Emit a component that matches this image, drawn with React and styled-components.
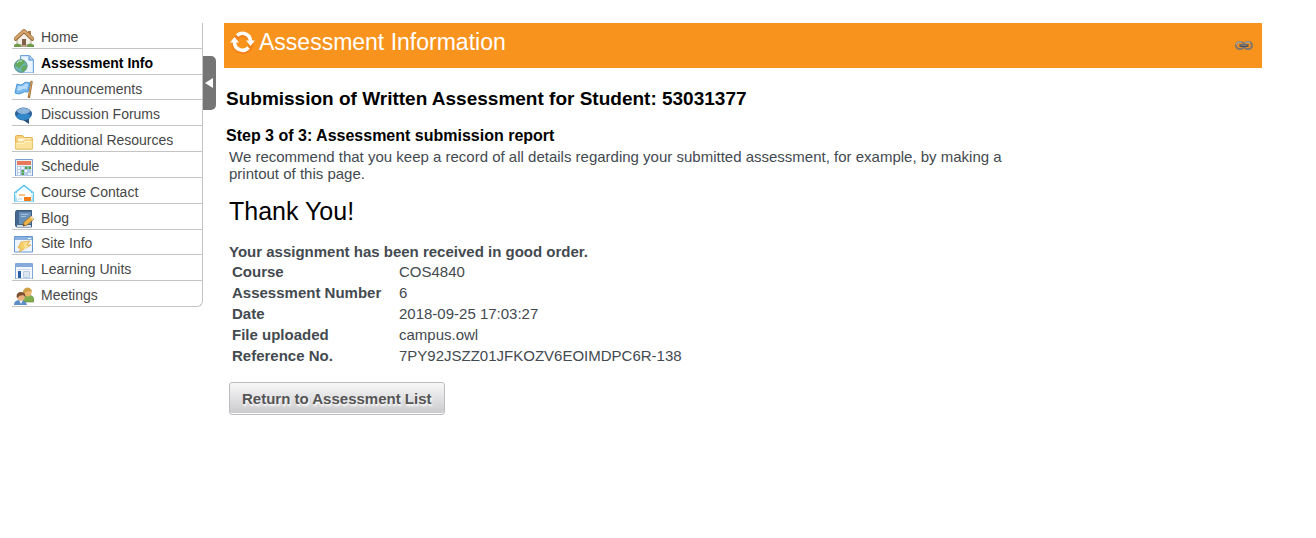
import React from "react";
import styled, { createGlobalStyle, css } from "styled-components";

const GlobalStyle = createGlobalStyle`
  * { box-sizing: border-box; }
  body {
    margin: 0;
    background: #fff;
    color: #434a50;
    font-family: "Liberation Sans", Arial, sans-serif;
    font-size: 15px;
    line-height: 17px;
  }
`;

const Page = styled.div`
  display: flex;
  align-items: flex-start;
  padding: 23px 54px 23px 12px;
`;

const Sidebar = styled.nav`
  flex: 0 0 191px;
`;

const ToolList = styled.ul`
  display: flex;
  flex-direction: column;
  min-height: 284px;
  margin: 0;
  padding: 0;
  list-style: none;
  border-right: 1px solid #c4c4c4;
  border-bottom: 1px solid #c4c4c4;
  border-bottom-right-radius: 6px;
`;

const ToolItem = styled.li`
  display: flex;
  flex: 1 0 0;
  & + & {
    border-top: 1px solid #c4c4c4;
  }
`;

const ToolLink = styled.a`
  display: flex;
  flex: 1;
  align-items: center;
  gap: 7px;
  padding: 4px 0 0 2px;
  color: #474747;
  font-size: 14px;
  text-decoration: none;
  svg {
    flex: none;
    align-self: flex-end;
    margin-bottom: 1px;
  }
  ${(p) =>
    p.$current &&
    css`
      color: #000;
      font-weight: bold;
    `}
`;

const CollapseButton = styled.button`
  display: flex;
  flex: 0 0 13px;
  align-items: center;
  justify-content: center;
  height: 54px;
  margin: 33px 8px 0 0;
  padding: 0;
  border: 0;
  border-radius: 0 5px 5px 0;
  background: #757575;
`;

const Main = styled.main`
  flex: 1;
  min-width: 0;
`;

const TitleBar = styled.header`
  display: flex;
  align-items: flex-start;
  justify-content: space-between;
  height: 45px;
  padding: 5px 8px 0 6px;
  background: #f8941d;
  color: #fff;
`;

const TitleGroup = styled.div`
  display: flex;
  gap: 3px;
`;

const Title = styled.h1`
  margin: 0;
  font-size: 23px;
  font-weight: normal;
  line-height: 28px;
`;

const PermaLink = styled.a`
  display: block;
  height: 12px;
  margin-top: 10px;
`;

const PageHeading = styled.h2`
  margin: 20px 0 0 2px;
  color: #000;
  font-size: 19px;
  line-height: 22px;
`;

const StepHeading = styled.h3`
  margin: 16px 0 0 2px;
  color: #000;
  font-size: 16px;
  line-height: 20px;
`;

const Report = styled.section`
  max-width: 790px;
  padding: 2px 0 0 5px;
`;

const Advice = styled.p`
  margin: 0;
`;

const Thanks = styled.h2`
  margin: 14px 0 0;
  color: #000;
  font-size: 25px;
  font-weight: normal;
  line-height: 30px;
`;

const Received = styled.p`
  margin: 17px 0 0;
  font-weight: bold;
`;

const Details = styled.table`
  margin-top: 1px;
  border-collapse: collapse;
  th,
  td {
    height: 21px;
    padding: 2px 3px;
    text-align: left;
    vertical-align: middle;
  }
  th {
    width: 167px;
  }
`;

const ReturnButton = styled.button`
  height: 33px;
  margin-top: 16px;
  padding: 0 12px;
  border: 1px solid #bdbdc1;
  border-radius: 3px;
  background: linear-gradient(#f8f8f8, #c9c9cd);
  box-shadow: inset 0 -1px #fff;
  color: #555;
  font: bold 15px/17px "Liberation Sans", Arial, sans-serif;
  text-shadow: 1px 2px 2px #fff;
`;

const Icon = ({ children }) => (
  <svg width="20" height="18" viewBox="0 0 20 18" aria-hidden="true">
    {children}
  </svg>
);

const HomeIcon = () => (
  <Icon>
    <path d="M3 9 10 2l7 7v7H3z" fill="#f3efe7" stroke="#b5ad9e" />
    <path d="M14 2h3v5l-3-3z" fill="#b97a43" />
    <path d="M1.500 10 10 2l8.500 8" fill="none" stroke="#99683a" strokeWidth="3.800" strokeLinecap="round" strokeLinejoin="round" />
    <path d="M1.500 9.700 10 1.800l8.500 7.900" fill="none" stroke="#d3a36c" strokeWidth="2.400" strokeLinecap="round" />
    <path d="M8 10h4v7H8z" fill="#806047" />
    <path d="M0 18v-2q3-3 7 0v2zM13 18v-2q3-3 7 0v2z" fill="#6f9a4a" />
    <path d="M7 16h6v2H7z" fill="#b7a28a" />
  </Icon>
);

const GlobeDocIcon = () => (
  <Icon>
    <path d="M6.500 .5h9l4 4V18h-13z" fill="#cfe5fb" stroke="#6fa5dc" />
    <path d="M8 2h6v4h4v11H8z" fill="#eaf4ff" />
    <path d="M15 .5v4.500h4.500" fill="#a9cdf3" stroke="#5e97d3" />
    <circle cx="6.800" cy="11" r="6.300" fill="#6cb4b4" stroke="#5b8f86" />
    <path d="M3 7q3-3 6-2l2 3-3 2-2 3-3-1-2-2zM9 11l4-1-1 4-3 3-2-3z" fill="#63a95c" />
    <path d="M3 8q2-3 5-2" stroke="#c8ebc9" fill="none" />
  </Icon>
);

const FlagIcon = () => (
  <Icon>
    <path d="M17.500 2 15 17" stroke="#a37239" strokeWidth="2.400" strokeLinecap="round" />
    <path d="M17.500 2 15 16" stroke="#d0a064" strokeWidth="1" />
    <path d="M3 4q4 2 6 0 2-3 7-1l-2 9q-4-1-6 1-3 2-7 0z" fill="#78b9ee" stroke="#4c97d6" />
    <path d="M4 6q4 1 6-1 2-2 4-1l-1 5q-4-1-6 1-2 1-4 0z" fill="#b7dcfa" />
  </Icon>
);

const BubbleIcon = () => (
  <Icon>
    <path d="M9 13h6v5l-6-4z" fill="#27507f" />
    <ellipse cx="9.500" cy="8" rx="8.500" ry="6.500" fill="#2c5f9c" />
    <ellipse cx="9.500" cy="10.500" rx="7" ry="3.500" fill="#3188c9" />
    <ellipse cx="9.500" cy="5" rx="6.500" ry="3" fill="#8fb5da" />
  </Icon>
);

const FolderIcon = () => (
  <Icon>
    <path d="M1.500 17V4.500q0-1 1-1h6l2 2h7q1 0 1 1V17z" fill="#f4cf75" stroke="#e2b354" />
    <path d="M4 6.500h13v4H4z" fill="#fff8de" />
    <path d="M1.500 17v-6q0-1 1-1h6l2-2h8v9z" fill="#fae39c" stroke="#ecc568" />
    <path d="M3 11.500h6.500l2-2H17" fill="none" stroke="#fff4c4" />
  </Icon>
);

const CalendarIcon = () => (
  <Icon>
    <path d="M1.500 1.500h17V18h-17z" fill="#e9f1fb" stroke="#7ba1d1" />
    <path d="M3 3h14v4H3z" fill="#e57b5a" />
    <path d="M3 8h14v9H3z" fill="#b3cdea" />
    <path d="M4 9h2v2H4zM7.500 9h2v2h-2zM4 12h2v2H4zM11 12h2v2h-2zM14.500 15h2v2h-2zM4 15h2v2H4z" fill="#fff" />
    <path d="M11 8.500h2.500V11H11zM14.500 8.500H17V11h-2.500zM7.500 12H10v2.500H7.500zM7.500 15H10v2H7.500z" fill="#50a34b" />
  </Icon>
);

const ContactIcon = () => (
  <Icon>
    <path d="M1 8.500 10 1.500l9 7" fill="#f2fbff" stroke="#56c2ea" strokeWidth="1.500" />
    <path d="M.5 8.500h19V18H.5z" fill="#e2f6fd" stroke="#63c7ec" />
    <path d="M3 8h14v9H3z" fill="#fff" />
    <path d="M1 10v8h3zM19 10v8h-2z" fill="#a5e0f6" />
    <path d="M5 10h6v2H5z" fill="#f6c27f" />
    <path d="M10 13h7v4h-7z" fill="#f17c16" />
    <path d="M4 14h4v2H4z" fill="#d6e9f2" />
  </Icon>
);

const BlogIcon = () => (
  <Icon>
    <path d="M3 .5h14.500V17H3q-1.500 0-1.500-2V2.500q0-2 1.500-2z" fill="#44688f" stroke="#3c5b7d" />
    <path d="M5 2h12v12H5z" fill="#6991b8" />
    <path d="M3 15h14v2H3z" fill="#d3dbe4" />
    <path d="M7 4h7v1H7zM7 6h5v1H7z" fill="#a3c0da" />
    <path d="m9 16 1-4 7-6 3 3-7 6z" fill="#efb64c" stroke="#9b6b28" strokeWidth=".8" />
    <path d="m16 7 3 3 1-2-2-2z" fill="#f5dec0" />
    <path d="m9 16 .6-2 1.400 1.300z" fill="#463728" />
  </Icon>
);

const SiteInfoIcon = () => (
  <Icon>
    <path d="M.5 1.500h18V17H.5z" fill="#eef5fd" stroke="#6597d2" />
    <path d="M1 2h17v3H1z" fill="#8ab1df" />
    <path d="M14 3h3v1h-3z" fill="#fff" />
    <path d="m7 7 9-1-3 4h4L5 17l2-4H4z" fill="#f6cf68" stroke="#e0ac45" strokeWidth=".8" />
    <path d="m9 8 4-.5-3 3.500h4l-4 3" fill="none" stroke="#ffeaa6" />
  </Icon>
);

const UnitsIcon = () => (
  <Icon>
    <path d="M1.500 2.500h17V18h-17z" fill="#f3f7fc" stroke="#7fa8d7" />
    <path d="M2 3h16v3H2z" fill="#83aada" />
    <path d="M4 8h12v1H4z" fill="#cadbed" />
    <path d="M4 10h3v7H4z" fill="#255fa8" />
    <path d="M9.500 10.500h6v6h-6z" fill="#dce6f1" stroke="#b6cae1" />
  </Icon>
);

const PeopleIcon = () => (
  <Icon>
    <path d="M9 14q0-6 6-6 5 1 5 5v2H9z" fill="#7fae4c" stroke="#58873a" strokeWidth=".6" />
    <circle cx="13.500" cy="5.500" r="4" fill="#edb66d" />
    <path d="M9 5q0-4 4.500-4.500Q18 1 18 5l-2-1-4 1-2 2z" fill="#cfa046" />
    <path d="M0 18q0-5 6-5t7 5z" fill="#5c8dc4" />
    <path d="m5 13 2 4 2-4z" fill="#eef6ff" />
    <circle cx="7" cy="10" r="3.800" fill="#e9b181" />
    <path d="M2.500 10q0-5 4.500-5t4.500 5L9 8l-4 1-1 2z" fill="#7d4e2f" />
  </Icon>
);

const RefreshIcon = () => (
  <svg width="26" height="28" viewBox="0 0 26 28" aria-hidden="true">
    <circle cx="12.500" cy="15.500" r="8.500" fill="none" stroke="#ee7417" strokeWidth="4.500" opacity=".6" />
    <g fill="none" stroke="#fff" strokeWidth="3.600">
      <path d="M7 7.500A8 8 0 0 1 20.500 13" />
      <path d="M18.500 19.500A8 8 0 0 1 4.500 14" />
    </g>
    <path d="M16 12.500h9l-4.500 5.500zM0 14.500h9L4.500 9z" fill="#fff" />
  </svg>
);

const ChainIcon = () => (
  <svg width="20" height="12" viewBox="0 0 20 12" aria-hidden="true">
    <g fill="none" stroke="#85786a" strokeWidth="2.200">
      <rect x="2" y="2" width="8" height="7" rx="3.500" />
      <rect x="10" y="2" width="8" height="7" rx="3.500" />
    </g>
    <path d="M2 5q0-3 3.500-3h2M11 2.500q3-1 5 0" stroke="#bcb4aa" fill="none" />
    <path d="M5.500 5.500h9" stroke="#514e54" strokeWidth="3" />
    <path d="M6.500 5h7" stroke="#9c9890" />
  </svg>
);

const tools = [
  ["Home", HomeIcon],
  ["Assessment Info", GlobeDocIcon],
  ["Announcements", FlagIcon],
  ["Discussion Forums", BubbleIcon],
  ["Additional Resources", FolderIcon],
  ["Schedule", CalendarIcon],
  ["Course Contact", ContactIcon],
  ["Blog", BlogIcon],
  ["Site Info", SiteInfoIcon],
  ["Learning Units", UnitsIcon],
  ["Meetings", PeopleIcon],
];

const details = [
  ["Course", "COS4840"],
  ["Assessment Number", "6"],
  ["Date", "2018-09-25 17:03:27"],
  ["File uploaded", "campus.owl"],
  ["Reference No.", "7PY92JSZZ01JFKOZV6EOIMDPC6R-138"],
];

export default function App() {
  return (
    <>
      <GlobalStyle />
      <Page>
        <Sidebar aria-label="Tools">
          <ToolList>
            {tools.map(([name, ToolIcon]) => {
              const current = name === "Assessment Info";
              return (
                <ToolItem key={name}>
                  <ToolLink href="#" $current={current} aria-current={current ? "page" : undefined}>
                    <ToolIcon />
                    {name}
                  </ToolLink>
                </ToolItem>
              );
            })}
          </ToolList>
        </Sidebar>
        <CollapseButton type="button" aria-label="Collapse tool menu">
          <svg width="9" height="10" viewBox="0 0 9 10" aria-hidden="true">
            <path d="M0 5 8 0v10z" fill="#fff" />
          </svg>
        </CollapseButton>
        <Main>
          <TitleBar>
            <TitleGroup>
              <RefreshIcon />
              <Title>Assessment Information</Title>
            </TitleGroup>
            <PermaLink href="#" aria-label="Direct link">
              <ChainIcon />
            </PermaLink>
          </TitleBar>
          <PageHeading>Submission of Written Assessment for Student: 53031377</PageHeading>
          <StepHeading>Step 3 of 3: Assessment submission report</StepHeading>
          <Report>
            <Advice>
              We recommend that you keep a record of all details regarding your submitted
              assessment, for example, by making a printout of this page.
            </Advice>
            <Thanks>Thank You!</Thanks>
            <Received>Your assignment has been received in good order.</Received>
            <Details>
              <tbody>
                {details.map(([label, value]) => (
                  <tr key={label}>
                    <th scope="row">{label}</th>
                    <td>{value}</td>
                  </tr>
                ))}
              </tbody>
            </Details>
            <ReturnButton type="button">Return to Assessment List</ReturnButton>
          </Report>
        </Main>
      </Page>
    </>
  );
}
